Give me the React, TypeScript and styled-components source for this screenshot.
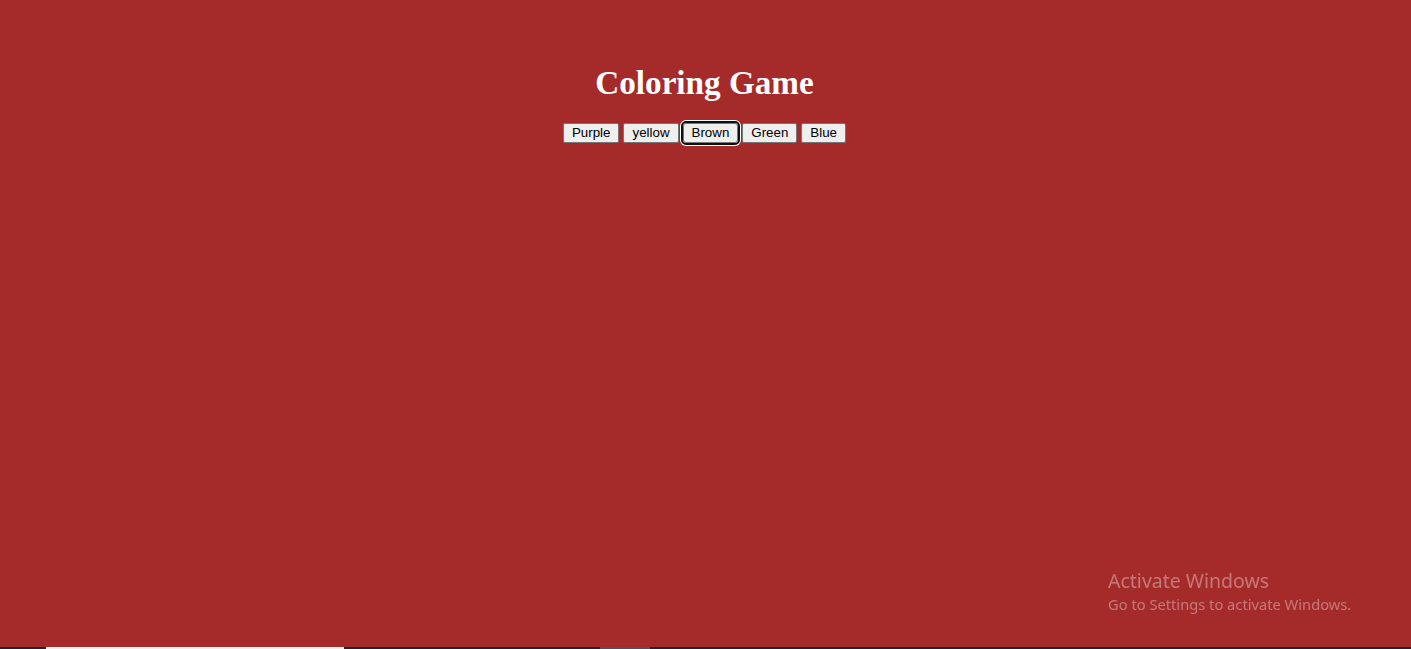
import React from "react";
import styled, { createGlobalStyle } from "styled-components";

const Global = createGlobalStyle`
  html, body {
    margin: 0;
    padding: 0;
    height: 100%;
    background: #a52a2a;
    overflow: hidden;
  }
  body {
    font-family: "Liberation Serif", "Times New Roman", serif;
  }
`;

const Page = styled.main`
  display: flex;
  flex-direction: column;
  align-items: center;
  padding-top: 64px;
`;

const Title = styled.h1`
  margin: 0;
  font-family: "Liberation Serif", "Times New Roman", serif;
  font-size: 33.2px;
  font-weight: bold;
  line-height: 38px;
  color: #ffffff;
  transform: translateX(-1px);
`;

const ButtonRow = styled.div`
  display: flex;
  gap: 4px;
  margin-top: 21px;
  margin-left: -2px;
`;

const ColorButton = styled.button`
  font-family: "Liberation Sans", Arial, sans-serif;
  font-size: 13.333px;
  line-height: 16px;
  color: #000;
  background: #efefef;
  border: 1px solid #767676;
  border-radius: 2px;
  padding: 1px 8px;
  height: 20px;
  cursor: pointer;
  &[data-focused="true"] {
    outline: 2px solid #101010;
    outline-offset: 0;
    border-radius: 3px;
    box-shadow: 0 0 0 3px #ffffff;
  }
`;

const Watermark = styled.div`
  position: fixed;
  left: 1108px;
  top: 568px;
  font-family: "Noto Sans", "Open Sans", sans-serif;
  color: rgba(255, 255, 255, 0.36);
`;

const WatermarkTitle = styled.div`
  font-size: 19.5px;
  line-height: 26px;
`;

const WatermarkText = styled.div`
  font-size: 14.7px;
  line-height: 20px;
`;

const Taskbar = styled.div`
  position: fixed;
  left: 0;
  right: 0;
  bottom: 0;
  height: 2px;
  display: flex;
`;

const TaskSeg = styled.div<{ $width?: number; $color: string }>`
  height: 2px;
  flex: ${(p) => (p.$width ? `0 0 ${p.$width}px` : "1 1 auto")};
  background: ${(p) => p.$color};
`;

const colors = ["Purple", "yellow", "Brown", "Green", "Blue"];

export default function App() {
  return (
    <>
      <Global />
      <Page>
        <Title>Coloring Game</Title>
        <ButtonRow>
          {colors.map((c) => (
            <ColorButton key={c} data-focused={c === "Brown"}>
              {c}
            </ColorButton>
          ))}
        </ButtonRow>
      </Page>
      <Watermark>
        <WatermarkTitle>Activate Windows</WatermarkTitle>
        <WatermarkText>Go to Settings to activate Windows.</WatermarkText>
      </Watermark>
      <Taskbar>
        <TaskSeg $width={46} $color="#1e2430" />
        <TaskSeg $width={298} $color="#f2f2f2" />
        <TaskSeg $width={256} $color="#1e2430" />
        <TaskSeg $width={50} $color="#4b5260" />
        <TaskSeg $color="#1e2430" />
      </Taskbar>
    </>
  );
}
